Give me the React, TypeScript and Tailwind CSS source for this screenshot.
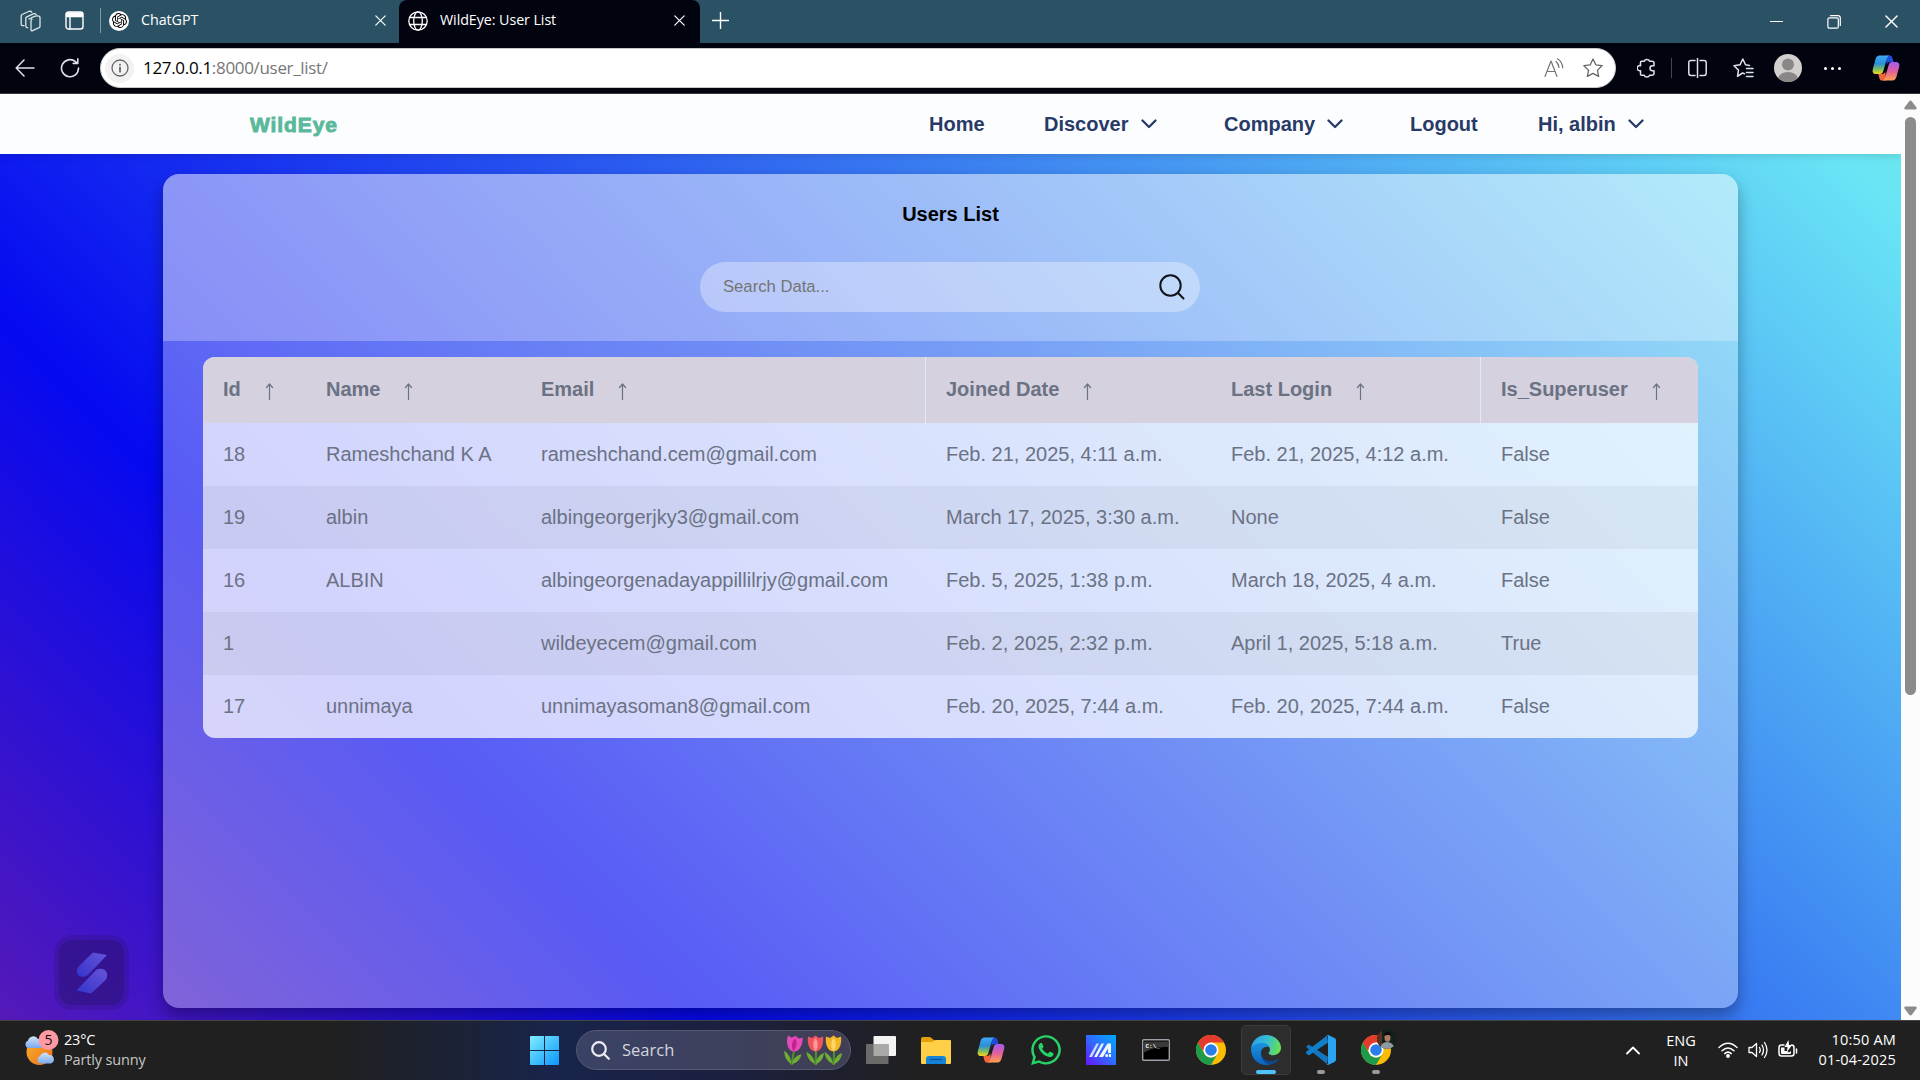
import type { ReactNode } from "react";
import { SiOpenai } from "react-icons/si";
import { FaWhatsapp } from "react-icons/fa";

const UI = "font-['Segoe_UI','Open_Sans',sans-serif]";
const ARIAL = "font-['Liberation_Sans',Arial,sans-serif]";

type IconProps = { w: number; h?: number; box?: string; children: ReactNode; className?: string; sw?: number };
function Line({ w, h, box, children, className = "", sw = 1.4 }: IconProps) {
  return (
    <svg width={w} height={h ?? w} viewBox={box ?? `0 0 ${w} ${h ?? w}`} fill="none" stroke="currentColor" strokeWidth={sw} strokeLinecap="round" strokeLinejoin="round" className={`shrink-0 ${className}`}>
      {children}
    </svg>
  );
}

function CloseX({ s = 11 }: { s?: number }) {
  return (
    <Line w={s} box="0 0 11 11" sw={1.2} className="text-white">
      <path d="M.8.8l9.4 9.4M10.2.8L.8 10.2" />
    </Line>
  );
}

function Copilot({ id }: { id: string }) {
  return (
    <svg width="28" height="26" viewBox="0 0 28 26" className="shrink-0">
      <defs>
        <linearGradient id={`${id}a`} x1="0" y1="0" x2="0" y2="1">
          <stop offset="0" stopColor="#3fa9f5" />
          <stop offset=".45" stopColor="#2a8fd8" />
          <stop offset=".75" stopColor="#7fbf5c" />
          <stop offset="1" stopColor="#ffd21f" />
        </linearGradient>
        <linearGradient id={`${id}b`} x1="0" y1="0" x2="0" y2="1">
          <stop offset="0" stopColor="#a35bf0" />
          <stop offset=".5" stopColor="#e0609c" />
          <stop offset="1" stopColor="#ffa04d" />
        </linearGradient>
      </defs>
      <path d="M14 .5h3.8c1.5 0 2.2 1 2.7 2.600L21.600 7H18c-2 0-2.800 1.300-3.300 3z" fill="#1e4fd8" />
      <path d="M14 25.500H10c-1.500 0-2.200-1-2.700-2.600L6.300 19H10c2 0 2.800-1.300 3.300-3z" fill="#f4643c" />
      <path d="M7.500.5h10.300c-1.500 0-2.300 1.200-2.800 2.800l-3.600 12.500C10.800 18 9.800 19 7.800 19H4C1.200 19 .1 16.800.8 14.200L3.500 4.200C4.200 1.800 5.500.5 7.500.5z" fill={`url(#${id}a)`} />
      <path d="M20.500 25.500H10.200c1.500 0 2.300-1.200 2.800-2.800l3.600-12.500C17.200 8 18.200 7 20.200 7H24c2.800 0 3.900 2.200 3.200 4.800l-2.700 10c-.7 2.400-2 3.700-4 3.700z" fill={`url(#${id}b)`} />
    </svg>
  );
}

function Chrome() {
  return (
    <svg width="30" height="30" viewBox="0 0 30 30" className="shrink-0">
      <circle cx="15" cy="15" r="15" fill="#fbbc05" />
      <path d="M2 7.500 8.500 18.750A7.500 7.500 0 0 0 15 22.500a7.500 7.500 0 0 0 6.500-3.750L15 30A15 15 0 0 1 2 7.500z" fill="#1e9a4b" />
      <path d="M2 7.500A15 15 0 0 1 28 7.500H15V15H6.300z" fill="#e33b2e" />
      <circle cx="15" cy="15" r="7.500" fill="#fff" />
      <circle cx="15" cy="15" r="5.800" fill="#2b7de9" />
    </svg>
  );
}

function Edge() {
  return (
    <svg width="30" height="30" viewBox="0 0 30 30" className="shrink-0">
      <defs>
        <linearGradient id="eg1" x1="0" y1=".3" x2="1" y2=".5">
          <stop offset="0" stopColor="#2b9fe6" />
          <stop offset=".5" stopColor="#33bdd6" />
          <stop offset="1" stopColor="#6be04f" />
        </linearGradient>
        <linearGradient id="eg2" x1="0" y1="0" x2="0" y2="1">
          <stop offset="0" stopColor="#1a93e0" />
          <stop offset="1" stopColor="#0a62bf" />
        </linearGradient>
      </defs>
      <path d="M0 14C.6 6 7 0 15 0c9 0 15 6.300 15 12.800 0 4.400-3.500 7.400-7.600 7.400-3 0-4.800-.9-4.800-2.100 0-.9 1.300-1.400 1.300-3.700 0-3.200-3-6-7.500-6C6 8.400 1.300 10.600 0 14z" fill="url(#eg1)" />
      <path d="M0 14c1.300-3.600 5.500-5.900 10.500-5.900 3.800 0 6.600 1.500 7.800 3.700-5.700-.8-8.300 2.500-8.300 6.200 0 6 4.600 10.600 9 11.400-1.200.4-2.600.6-4 .6C6.500 30 0 23 0 14z" fill="url(#eg2)" />
      <path d="M11.200 13.500c-2.600 3.800-1.200 10.300 5.300 12.300 4.800 1.400 8.800-.7 10.600-2.200.6-.4 1.100.1.700.7C25.400 27.800 22 29.500 18.800 29.500 13.500 28.700 9.900 23.500 10 18c0-1.800.4-3.300 1.200-4.500z" fill="#0c4a94" />
    </svg>
  );
}

function VsCode() {
  return (
    <svg width="30" height="30" viewBox="0 0 30 30" className="shrink-0">
      <path d="M1.600 10.400 0 12l21 17 1-7L3.500 10c-.7-.4-1.300-.2-1.900.4z" fill="#1277bd" />
      <path d="M1.600 19.600.3 18.300c-.5-.5-.4-1.200.1-1.700L21 .6l1 7L3.500 20c-.7.4-1.300.2-1.900-.4z" fill="#0f7fcc" />
      <path d="M22 30c-.8 0-1.500-.3-2-.8 1 .6 2-.1 2-1.200V2C22 .9 21 .2 20 .8c.6-.7 1.400-1 2.300-.7l6.200 3C29.500 3.600 30 4.400 30 5.400v19.200c0 1-.5 1.800-1.500 2.300z" fill="#2aa4f0" />
    </svg>
  );
}

function Tulip({ c, d, className = "" }: { c: string; d: string; className?: string }) {
  return (
    <svg width="19" height="30" viewBox="0 0 19 30" className={`shrink-0 ${className}`}>
      <path d="M9 16h2v14H8.500z" fill="#4d8d2c" />
      <path d="M9 29C4 27 1 22 .5 17c4 2 8 6 8.500 12zM10 29c0-5 3-9 8-11-.5 5-3 9-8 11z" fill="#6fae35" />
      <path d="M2 1.500 6 3l3.500-2.500L13 3l4-1.500c1 6-1 15-7.500 15S1 7.500 2 1.500z" fill={c} />
      <path d="M9.500 3c3 4 3 9 0 13.500-3-4.500-3-9.500 0-13.500z" fill={d} />
    </svg>
  );
}

function BrowserTabs() {
  return (
    <div className={`flex h-[43px] items-start bg-[#2b5264] text-[14.300px] text-white ${UI}`}>
      <div className="flex h-[41px] w-[399px] items-center">
        <Line w={22} h={22} sw={1.300} className="ml-[19px] text-[#dbe6ea]">
          <path d="M9.500 8.200 15 5.600q2-.8 4.500-.2 1 .4 1 1.400v8.600q0 1-.9 1.500l-6.500 2.900q-1.600.6-1.600-1V9.900q0-1 1-1.500" transform="translate(.5 .8)" />
          <path d="M8.800 17.800q-2-.1-2-1.500V8.400q0-1 1-1.500l6.400-3q2-.9 3 .6M5 15.700q-2.800.2-2.800-1.500V6q0-1 1-1.500l6.300-3q2.400-.8 3.300.8" />
        </Line>
        <Line w={19} h={19} sw={1.400} className="ml-[24px] text-white">
          <rect x="1" y="1" width="17" height="17" rx="2.500" />
          <path d="M1.500 2h16v3.500h-16zM5 6v12" fill="currentColor" />
        </Line>
        <div className="ml-[16px] h-[25px] w-px bg-[#7f9aa6]" />
        <div className="ml-[8px] flex size-[20px] items-center justify-center rounded-full bg-white text-black">
          <SiOpenai size={15} />
        </div>
        <div className="ml-3 w-[234px] pb-[2px] tracking-[-0.050px]">ChatGPT</div>
        <CloseX />
      </div>
      <div className="flex h-[43px] w-[301px] items-center rounded-t-[8px] bg-[#01040f] pb-[2px]">
        <Line w={20} sw={1.300} className="ml-[9px]">
          <circle cx="10" cy="10" r="9.200" />
          <ellipse cx="10" cy="10" rx="4.300" ry="9.200" />
          <path d="M1.700 6.500h16.600M1.700 13.500h16.600" />
        </Line>
        <div className="ml-3 w-[234px] pb-[2px] tracking-[-0.080px]">WildEye: User List</div>
        <CloseX />
      </div>
      <div className="flex h-[41px] flex-1 items-center justify-between">
        <Line w={17} sw={1.400} className="ml-[12px]">
          <path d="M8.500.5v16M.5 8.500h16" />
        </Line>
        <div className="flex items-center pr-[22px] pt-[2px]">
          <div className="mr-[44px] h-px w-[13px] bg-white" />
          <Line w={14} sw={1.200} className="mr-[44px]">
            <rect x=".9" y="2.800" width="10.400" height="10.400" rx="1.500" />
            <path d="M3.500.7h7.500q2.300 0 2.300 2.300v7.500" />
          </Line>
          <CloseX s={13} />
        </div>
      </div>
    </div>
  );
}

function Toolbar() {
  return (
    <div className={`flex h-[51px] items-center border-b border-[#34363d] bg-[#01040f] text-[#dfe1e6] ${UI}`}>
      <Line w={20} h={18} sw={1.500} className="ml-[15px]">
        <path d="M19 9H1.500M9 1 1.200 9 9 17" />
      </Line>
      <Line w={20} h={20} sw={1.600} className="ml-[25px]">
        <path d="M18.500 10a8.500 8.500 0 1 1-3-6.300l1.500 1.400M17.800.9v4.500h-4.600" />
      </Line>
      <div className="ml-5 flex h-10 w-[1516px] items-center rounded-full border border-[#c9c9cc] bg-white">
        <div className="ml-[4px] flex size-[29px] items-center justify-center rounded-full bg-[#f2f2f2] text-[#666]">
          <Line w={18} sw={1.300}>
            <circle cx="9" cy="9" r="8" />
            <path d="M9 8.500v4.200M9 5.600v.2" strokeWidth="1.800" />
          </Line>
        </div>
        <div className="ml-[9px] flex-1 text-[17px] tracking-[-0.320px] text-[#767676]">
          <span className="text-black">127.0.0.1</span>:8000/user_list/
        </div>
        <Line w={20} h={20} sw={1.200} className="text-[#747474]">
          <path d="M1 18.500 7 3l6 15.500M3 13.500h8M12 3.500q2.800 2.300 3 6M13.500.8q4.800 3 5.200 9" />
        </Line>
        <Line w={20} h={20} sw={1.300} className="ml-[19px] mr-[12px] text-[#666]">
          <path d="m10 1 2.800 5.800 6.300.9-4.600 4.400 1.100 6.300L10 15.400l-5.600 3 1.100-6.300L.9 7.700l6.300-.9z" />
        </Line>
      </div>
      <Line w={19} h={20} sw={1.500} className="ml-[21px]">
        <path d="M4.500 3.200h2.700a2.800 2.400 0 0 1 5.400 0H15q2 0 2 2v2.500h-1.500a2.500 2.500 0 1 0 0 5H17v2.500q0 2-2 2h-2.400a2.800 2.400 0 0 1-5.400 0H4.500q-1 0-1-1v-3.500a2.600 2.600 0 1 1 0-5V4.200q0-1 1-1z" />
      </Line>
      <div className="ml-[15px] h-5 w-px bg-[#44474f]" />
      <Line w={19} h={20} sw={1.500} className="ml-[16px]">
        <path d="M9.500.5v19M7 2.500H3Q.8 2.500.8 4.700v10.600q0 2.200 2.200 2.200h4M12 2.500h4q2.200 0 2.200 2.200v10.600q0 2.200-2.200 2.200h-4" />
      </Line>
      <Line w={21} h={20} sw={1.500} className="ml-[26px]">
        <path d="M11.500 15.700 9.500 15l-5 3.300 1-6.200L1 7.700l6-.9L9.800 1l2.700 5.800 4 .6M13.500 10.500H20M13.500 14.500H20M13.500 18.500H20" />
      </Line>
      <svg width="28" height="28" viewBox="0 0 28 28" className="ml-[20px] shrink-0">
        <clipPath id="av"><circle cx="14" cy="14" r="14" /></clipPath>
        <g clipPath="url(#av)">
          <rect width="28" height="28" fill="#d2d0ce" />
          <circle cx="14" cy="10.500" r="6" fill="#8a8886" />
          <ellipse cx="14" cy="25" rx="10" ry="7" fill="#8a8886" />
        </g>
      </svg>
      <div className="ml-[22px] flex gap-[4px]">
        <i className="size-[3px] rounded-full bg-white" />
        <i className="size-[3px] rounded-full bg-white" />
        <i className="size-[3px] rounded-full bg-white" />
      </div>
      <div className="ml-[31px]"><Copilot id="tb" /></div>
    </div>
  );
}

function Chevron({ className }: { className: string }) {
  return (
    <Line w={16} h={10} sw={2.300} className={className}>
      <path d="m1.500 1.500 6.500 6.500 6.500-6.500" />
    </Line>
  );
}

function SiteNav() {
  return (
    <nav className={`relative z-10 flex h-[60px] items-center bg-[#fcfdff] text-[20px] font-bold text-[#283a66] shadow-[0_2px_8px_rgba(0,0,0,.12)] ${ARIAL}`}>
      <a className="ml-[250px] w-[679px] pt-px text-[21px] tracking-[0.900px] text-[#5ab89b] [-webkit-text-stroke:0.900px_#5ab89b]">WildEye</a>
      <a className="w-[115px]">Home</a>
      <a className="flex w-[180px] items-center">Discover<Chevron className="ml-[12px]" /></a>
      <a className="flex w-[186px] items-center">Company<Chevron className="ml-[12px]" /></a>
      <a className="w-[128px]">Logout</a>
      <a className="flex items-center">Hi, albin<Chevron className="ml-[12px]" /></a>
    </nav>
  );
}

const headers = ["Id", "Name", "Email", "Joined Date", "Last Login", "Is_Superuser"];
const rows = [
  ["18", "Rameshchand K A", "rameshchand.cem@gmail.com", "Feb. 21, 2025, 4:11 a.m.", "Feb. 21, 2025, 4:12 a.m.", "False"],
  ["19", "albin", "albingeorgerjky3@gmail.com", "March 17, 2025, 3:30 a.m.", "None", "False"],
  ["16", "ALBIN", "albingeorgenadayappillilrjy@gmail.com", "Feb. 5, 2025, 1:38 p.m.", "March 18, 2025, 4 a.m.", "False"],
  ["1", "", "wildeyecem@gmail.com", "Feb. 2, 2025, 2:32 p.m.", "April 1, 2025, 5:18 a.m.", "True"],
  ["17", "unnimaya", "unnimayasoman8@gmail.com", "Feb. 20, 2025, 7:44 a.m.", "Feb. 20, 2025, 7:44 a.m.", "False"],
];
const COLS = "grid grid-cols-[103px_215px_404px_286px_269px_1fr] items-center";

function UsersCard() {
  return (
    <main className={`ml-[163px] mt-5 h-[834px] w-[1575px] overflow-hidden rounded-[16px] bg-[#fff5] shadow-[0_8px_16px_#0005] ${ARIAL}`}>
      <section className="flex h-[167px] flex-col items-center bg-[#fff4] pt-[28px]">
        <h1 className="text-[20px] leading-6 font-bold text-black">Users List</h1>
        <div className="mt-[36px] mr-px flex h-[50px] w-[500px] items-center justify-between rounded-full bg-[#fff5] pr-[15px] pl-[23px]">
          <span className="pb-[2px] text-[16.670px] text-[#757575]">Search Data...</span>
          <Line w={26} h={26} sw={2} className="text-[#101418]">
            <circle cx="11.500" cy="11.500" r="10.200" />
            <path d="m18.800 18.800 5.700 5.700" />
          </Line>
        </div>
      </section>
      <section className="mx-[40px] mt-4 h-[381px] overflow-hidden rounded-[12px] bg-[#fffb] text-[20px] text-[#6b7284]">
        <div className={`${COLS} h-[66px] bg-[#d5d1de] font-bold`}>
          {headers.map((h, i) => (
            <div key={h} className={`flex h-full items-center pl-5 ${i === 3 || i === 5 ? "border-l border-[#e4e8fb]" : ""}`}>
              <span className="pb-[2px]">{h}</span>
              <Line w={9} h={17} sw={1.200} className="mt-[3px] ml-[24px]">
                <path d="M4.500 16.500V1M1.500 4.500l3-3.500 3 3.500" />
              </Line>
            </div>
          ))}
        </div>
        {rows.map((r, i) => (
          <div key={r[0]} className={`${COLS} h-[63px] ${i % 2 ? "bg-[#0000000b]" : ""}`}>
            {r.map((c, j) => (
              <div key={j} className={`pb-px whitespace-nowrap ${j === 5 || j === 3 ? "pl-[21px]" : "pl-5"}`}>{c}</div>
            ))}
          </div>
        ))}
      </section>
    </main>
  );
}

function FloatingWidget() {
  return (
    <div className="absolute bottom-[10px] left-[54px] rounded-[18px] bg-[#2a0f6a]/25 p-[5px]">
      <div className="flex size-[65px] items-center justify-center rounded-[13px] bg-[#2c1478]/50">
        <svg width="32" height="42" viewBox="0 0 32 42">
          <defs>
            <linearGradient id="sw" x1="1" y1="0" x2="0" y2="1">
              <stop offset="0" stopColor="#6654d8" />
              <stop offset="1" stopColor="#3434cc" />
            </linearGradient>
          </defs>
          <path d="M17 .5 31 3 12.500 22.500Q9 25.500 5 24.500.5 23 1 18q.5-2.500 3-5z" fill="url(#sw)" />
          <path d="M15 41.500.5 38.500 19 19q2-2.500 6-2.300 7 .8 6 8.300-.5 2-2 3.500z" fill="url(#sw)" />
        </svg>
      </div>
    </div>
  );
}

function Scrollbar() {
  return (
    <div className="flex w-[19px] flex-col items-center bg-[#fcfcfc]">
      <svg width="13" height="10" viewBox="0 0 13 10" className="mt-[6px]"><path d="M6.500.5Q7.200.5 8 1.500l4.500 6q.8 1.500-1 2H1.500q-1.800-.5-1-2L5 1.500q.8-1 1.500-1z" fill="#8b8b8b" /></svg>
      <div className="mt-[7px] h-[578px] w-[11px] rounded-full bg-[#8b8b8b]" />
      <svg width="13" height="10" viewBox="0 0 13 10" className="mt-auto mb-[4px] rotate-180"><path d="M6.500.5Q7.200.5 8 1.500l4.500 6q.8 1.500-1 2H1.500q-1.800-.5-1-2L5 1.500q.8-1 1.500-1z" fill="#8b8b8b" /></svg>
    </div>
  );
}

function TaskCell({ children, active, dot }: { children: ReactNode; active?: boolean; dot?: boolean }) {
  return (
    <div className="flex w-[55px] justify-center">
      <div className={`relative flex h-[50px] w-[50px] items-center justify-center rounded-[5px] ${active ? "border border-[#3b3b3b] bg-[#2d2d2d]" : ""}`}>
        {children}
        {active && <i className="absolute bottom-0 h-[4px] w-[20px] rounded-full bg-[#4cc2ff]" />}
        {dot && <i className="absolute bottom-[1px] h-[4px] w-[8px] rounded-full bg-[#9a9a9a]" />}
      </div>
    </div>
  );
}

function Taskbar() {
  return (
    <footer className={`flex h-[60px] items-center border-t border-[#45453f] bg-[#202020] bg-[linear-gradient(90deg,#202020_330px,#18244a_560px,#1c2040_720px,#202020_930px)] pb-px text-white ${UI}`}>
      <div className="flex w-[530px] items-center">
        <svg width="36" height="36" viewBox="0 0 36 36" className="mb-[4px] ml-[23px] shrink-0">
          <defs>
            <linearGradient id="sun" x1="0" y1="0" x2="1" y2="1"><stop offset="0" stopColor="#f6b52c" /><stop offset="1" stopColor="#ee6a1c" /></linearGradient>
            <linearGradient id="cl" x1="0" y1="0" x2="0" y2="1"><stop offset="0" stopColor="#d0e3fb" /><stop offset="1" stopColor="#79a9ee" /></linearGradient>
          </defs>
          <circle cx="16.500" cy="22" r="13" fill="url(#sun)" />
          <path d="M5 18a4 4 0 0 1 0-7.500 5.500 5.500 0 0 1 10-1.500 4.500 4.500 0 0 1 3 9z" fill="url(#cl)" />
          <path d="M17 33.500a4 4 0 0 1 0-7.500 5 5 0 0 1 9-1 4.400 4.400 0 0 1 2 8.500z" fill="url(#cl)" />
          <circle cx="25.500" cy="10" r="10" fill="#ff99a4" />
          <text x="25.500" y="15" textAnchor="middle" fontSize="14" fontFamily="Open Sans, sans-serif" fill="#111">5</text>
        </svg>
        <div className="ml-[5px] text-[14.500px] leading-5 tracking-[-0.150px]">
          <div className="tracking-[-0.200px]">23°C</div>
          <div className="text-[#c6c6c6]">Partly sunny</div>
        </div>
      </div>
      <svg width="29" height="29" viewBox="0 0 29 29" className="shrink-0">
        <defs>
          <linearGradient id="win" x1="0" y1="0" x2="1" y2="1"><stop offset="0" stopColor="#7eeeff" /><stop offset="1" stopColor="#0c95fb" /></linearGradient>
        </defs>
        <path d="M0 1q0-1 1-1h13v14H0zM15 0h13q1 0 1 1v13H15zM0 15h14v14H1q-1 0-1-1zM15 15h14v13q0 1-1 1H15z" fill="url(#win)" />
      </svg>
      <div className="ml-[17px] flex h-10 w-[275px] items-center rounded-full border border-[#565871] bg-[linear-gradient(90deg,#3a4265,#403f55)] pr-[7px]">
        <Line w={19} h={19} sw={2.200} className="ml-[14px] text-[#ecedf2]">
          <circle cx="8" cy="8" r="6.800" /><path d="m13 13 4.800 4.800" />
        </Line>
        <div className="ml-[12px] flex-1 pt-px text-[16.500px] text-[#d4d5de]">Search</div>
        <Tulip c="#e649b8" d="#c1248e" className="mr-[3px] rotate-[8deg]" />
        <Tulip c="#f0555f" d="#f99b93" className="-mr-px" />
        <Tulip c="#f3b62a" d="#ffd565" />
      </div>
      <div className="ml-[2px] flex items-center">
        <TaskCell>
          <svg width="30" height="28" viewBox="0 0 30 28">
            <rect x="7.500" width="22.500" height="20" rx="1" fill="#f3f3f3" />
            <rect y="8" width="22.500" height="20" rx="1" fill="#6a6a6a" />
            <path d="M7.500 8h15v12h-15z" fill="#a9a9a9" />
          </svg>
        </TaskCell>
        <TaskCell>
          <svg width="30" height="27" viewBox="0 0 30 27">
            <path d="M0 2q0-2 2-2h7l4 3v5H0z" fill="#e3a008" />
            <path d="M0 5h11l3-2h15q1 0 1 1v22q0 1-1 1H1q-1 0-1-1z" fill="#ffcf48" />
            <path d="M5 27v-5q0-3 3-3h14q3 0 3 3v5z" fill="#1583d8" />
            <path d="M9 22.500h12" stroke="#0b4f96" strokeWidth="1.200" />
          </svg>
        </TaskCell>
        <TaskCell><Copilot id="tk" /></TaskCell>
        <TaskCell><FaWhatsapp size={34} color="#25d366" className="shrink-0" /></TaskCell>
        <TaskCell>
          <svg width="30" height="30" viewBox="0 0 30 30">
            <defs><linearGradient id="as" x1="0" y1="1" x2="1" y2="0"><stop offset="0" stopColor="#6a14ff" /><stop offset=".5" stopColor="#2f6bff" /><stop offset="1" stopColor="#00aaff" /></linearGradient></defs>
            <rect width="30" height="30" fill="url(#as)" />
            <path d="M3 22 10.500 8.500H13L6 22z" fill="#c9dcff" />
            <path d="M8 22 15.500 8.500H18L11 22zM13 22l8.500-13.500H25V18h-3v-4.500L17 22z" fill="#f0f5ff" />
            <circle cx="20.800" cy="20.500" r="1.500" fill="#fff" />
            <path d="M23 19h2v3h-2z" fill="#f0f5ff" />
          </svg>
        </TaskCell>
        <TaskCell>
          <svg width="28" height="22" viewBox="0 0 28 22">
            <rect x=".7" y=".7" width="26.600" height="20.600" rx="1" fill="#000" stroke="#9aa0a6" strokeWidth="1.400" />
            <path d="M1.500 2.500h25V8C14 8 8 10 1.500 14z" fill="#3a3a3a" />
            <text x="3.500" y="8.500" fontSize="6" fontWeight="bold" fontFamily="Liberation Mono, monospace" fill="#fff">C:\_</text>
          </svg>
        </TaskCell>
        <TaskCell><Chrome /></TaskCell>
        <TaskCell active><Edge /></TaskCell>
        <TaskCell dot><VsCode /></TaskCell>
        <TaskCell dot>
          <Chrome />
          <svg width="20" height="20" viewBox="0 0 20 20" className="absolute top-[4px] right-[4px]">
            <clipPath id="pp"><circle cx="10" cy="10" r="10" /></clipPath>
            <g clipPath="url(#pp)">
              <rect width="20" height="20" fill="#14201d" />
              <rect width="5" height="20" fill="#5a3020" />
              <path d="M3 20q1-7 7-7t8 7z" fill="#8d9aa5" />
              <ellipse cx="10.500" cy="8.500" rx="3" ry="4.200" fill="#a97c5f" />
              <path d="M7 7q0-4 3.500-4T14 7q-3-2-7 0z" fill="#0a0a0a" />
            </g>
          </svg>
        </TaskCell>
      </div>
      <div className="ml-auto flex items-center pr-[24px] text-[14.500px] leading-5">
        <Line w={14} h={9} sw={1.800}><path d="m1 7.500 6-6 6 6" /></Line>
        <div className="ml-[20px] w-[42px] pt-px text-center">ENG<br />IN</div>
        <Line w={20} h={16} sw={1.500} className="ml-[16px]">
          <path d="M1 5.500q9-8.500 18 0M4 8.700q6-5.500 12 0M6.700 11.600q3.300-3 6.600 0" />
          <circle cx="10" cy="14" r="1.200" fill="currentColor" />
        </Line>
        <Line w={20} h={18} sw={1.300} className="ml-[10px]">
          <path d="M1 6.500v5h3l4.500 4V2.500L4 6.500zM11.500 6.500q1.500 2.500 0 5M14 4q3 5 0 10M16.500 1.500q5 7.500 0 15" />
        </Line>
        <svg width="20" height="18" viewBox="0 0 20 18" className="mb-[3px] ml-[10px] shrink-0">
          <path d="M6 5H3.500Q1 5 1 7.500v6Q1 16 3.500 16h10q2.500 0 2.500-2.500v-6Q16 5 13.500 5M18.500 9v4" fill="none" stroke="#fff" strokeWidth="1.500" strokeLinecap="round" />
          <path d="M3 7.500h3.500V11H9l2 1.500 2-1.500v2q0 1-1 1H4q-1 0-1-1z" fill="#fff" />
          <path d="M10.500 0 6.500 7h3L9 12l5-7h-3z" fill="#fff" />
        </svg>
        <div className="w-[98px] pb-px text-right tracking-[0.180px]"><div>10:50 AM</div><div>01-04-2025</div></div>
      </div>
    </footer>
  );
}

export default function App() {
  return (
    <div className="flex h-[1080px] w-[1920px] flex-col overflow-hidden">
      <BrowserTabs />
      <Toolbar />
      <div className="flex h-[926px]">
        <div className="relative flex w-[1901px] flex-col overflow-hidden">
          <SiteNav />
          <div className="h-[866px] bg-[linear-gradient(45deg,#5519b8_0%,#0509f0_25.500%,#3a7df2_64.700%,#69e5f6_97.800%,#69e6ee_100%)]">
            <div className="flow-root"><UsersCard /></div>
          </div>
          <FloatingWidget />
        </div>
        <Scrollbar />
      </div>
      <Taskbar />
    </div>
  );
}
